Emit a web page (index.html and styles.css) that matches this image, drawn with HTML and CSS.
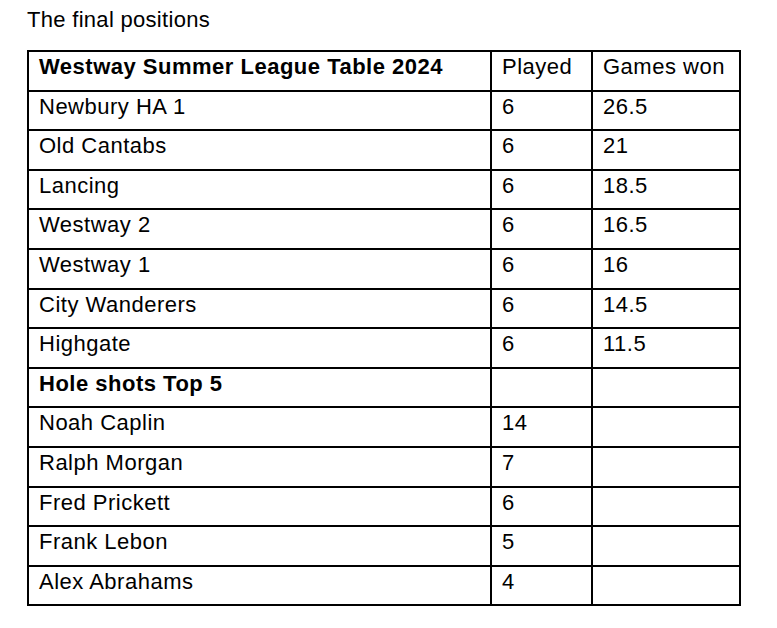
FILE: index.html
```html
<!DOCTYPE html>
<html>
<head>
<meta charset="utf-8">
<link rel="stylesheet" href="styles.css">
</head>
<body>
<div class="page">
  <p class="intro">The final positions</p>
  <table class="league">
    <tr><th>Westway Summer League Table 2024</th><td>Played</td><td>Games won</td></tr>
    <tr><td>Newbury HA 1</td><td>6</td><td>26.5</td></tr>
    <tr><td>Old Cantabs</td><td>6</td><td>21</td></tr>
    <tr><td>Lancing</td><td>6</td><td>18.5</td></tr>
    <tr><td>Westway 2</td><td>6</td><td>16.5</td></tr>
    <tr><td>Westway 1</td><td>6</td><td>16</td></tr>
    <tr><td>City Wanderers</td><td>6</td><td>14.5</td></tr>
    <tr><td>Highgate</td><td>6</td><td>11.5</td></tr>
    <tr><th>Hole shots Top 5</th><td></td><td></td></tr>
    <tr><td>Noah Caplin</td><td>14</td><td></td></tr>
    <tr><td>Ralph Morgan</td><td>7</td><td></td></tr>
    <tr><td>Fred Prickett</td><td>6</td><td></td></tr>
    <tr><td>Frank Lebon</td><td>5</td><td></td></tr>
    <tr><td>Alex Abrahams</td><td>4</td><td></td></tr>
  </table>
</div>
</body>
</html>
```
FILE: styles.css
```css
html, body {
  margin: 0;
  padding: 0;
  background: #fff;
}
.page {
  padding: 6px 0 0 27px;
  font-family: "Liberation Sans", Arial, sans-serif;
  color: #000;
}
.intro {
  margin: 0 0 16px 0;
  font-size: 22px;
  letter-spacing: 0.3px;
  line-height: 28px;
}
.league {
  border-collapse: collapse;
  width: 714px;
  font-size: 22px;
  letter-spacing: 0.5px;
}
.league tr {
  height: 39.6px;
}
.league th,
.league td {
  border: 2px solid #000;
  padding: 3px 10px 0 10px;
  vertical-align: top;
  text-align: left;
  line-height: 24px;
}
.league th {
  font-weight: bold;
}
.league tr > :nth-child(1) { width: 441px; }
.league tr > :nth-child(2) { width: 79px; }
```
